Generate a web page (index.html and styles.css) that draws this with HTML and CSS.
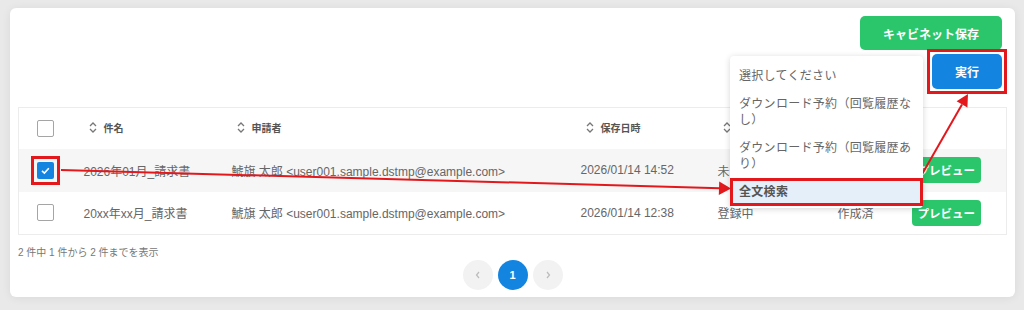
FILE: index.html
```html
<!DOCTYPE html>
<html lang="ja">
<head>
  <meta charset="UTF-8">
  <title>キャビネット一覧</title>
  <link rel="stylesheet" href="styles.css">
</head>
<body>

  <div class="card">
    <div class="actions">
      <button class="btn btn-save">キャビネット保存</button>
      <div class="exec-row">
        <ul class="select-list">
          <li>選択してください</li>
          <li>ダウンロード予約（回覧履歴なし）</li>
          <li>ダウンロード予約（回覧履歴あり）</li>
          <li class="active">全文検索</li>
        </ul>
        <button class="btn btn-exec marked">実行</button>
      </div>
    </div>

    <table class="doc-table">
      <colgroup>
        <col class="c-check">
        <col class="c-name">
        <col class="c-user">
        <col class="c-date">
        <col class="c-status">
        <col class="c-preview">
        <col class="c-action">
      </colgroup>
      <thead>
        <tr>
          <th class="check"><span class="cb"></span></th>
          <th><span class="sort"><svg width="8" height="13" viewBox="0 0 8 13"><path d="M1 5L4 2L7 5M1 8L4 11L7 8"/></svg>件名</span></th>
          <th><span class="sort"><svg width="8" height="13" viewBox="0 0 8 13"><path d="M1 5L4 2L7 5M1 8L4 11L7 8"/></svg>申請者</span></th>
          <th><span class="sort"><svg width="8" height="13" viewBox="0 0 8 13"><path d="M1 5L4 2L7 5M1 8L4 11L7 8"/></svg>保存日時</span></th>
          <th><span class="sort"><svg width="8" height="13" viewBox="0 0 8 13"><path d="M1 5L4 2L7 5M1 8L4 11L7 8"/></svg>ステータス</span></th>
          <th><span class="sort"><svg width="8" height="13" viewBox="0 0 8 13"><path d="M1 5L4 2L7 5M1 8L4 11L7 8"/></svg>作成</span></th>
          <th></th>
        </tr>
      </thead>
      <tbody>
        <tr>
          <td class="check"><span class="cb checked marked"><svg width="17" height="17" viewBox="0 0 17 17"><path d="M5 8.8L7.4 11L11.8 6.2"/></svg></span></td>
          <td>2026年01月_請求書</td>
          <td>鯱旗 太郎 &lt;user001.sample.dstmp@example.com&gt;</td>
          <td>2026/01/14 14:52</td>
          <td>未登録</td>
          <td>作成済</td>
          <td><button class="btn btn-preview">プレビュー</button></td>
        </tr>
        <tr>
          <td class="check"><span class="cb"></span></td>
          <td>20xx年xx月_請求書</td>
          <td>鯱旗 太郎 &lt;user001.sample.dstmp@example.com&gt;</td>
          <td>2026/01/14 12:38</td>
          <td>登録中</td>
          <td>作成済</td>
          <td><button class="btn btn-preview">プレビュー</button></td>
        </tr>
      </tbody>
    </table>

    <div class="info">2 件中 1 件から 2 件までを表示</div>

    <div class="pager">
      <span class="page"><svg width="6" height="8" viewBox="0 0 6 8"><path d="M4 1L1.5 4L4 7"/></svg></span>
      <span class="page current">1</span>
      <span class="page"><svg width="6" height="8" viewBox="0 0 6 8"><path d="M2 1L4.5 4L2 7"/></svg></span>
    </div>
  </div>

  <svg class="annot" width="1024" height="310" viewBox="0 0 1024 310">
    <line x1="61" y1="170" x2="720" y2="188.2"/>
    <polygon points="731,188.5 718.8,194.9 719.2,181.6"/>
    <line x1="921" y1="176" x2="962" y2="104.4"/>
    <polygon points="968,94 967.4,107.6 956.6,101.2"/>
  </svg>

</body>
</html>
```

FILE: styles.css
```css
* { box-sizing: border-box; }
body { margin: 0; height: 310px; overflow: hidden; position: relative; background: #e9e9e9; font-family: "Liberation Sans", "Noto Sans CJK JP", sans-serif; color: #666; }

.card { position: relative; margin: 8px 9px 0 10px; padding: 8px 8px 7px; background: #fff; border-radius: 6px; box-shadow: 0 1px 10px rgba(0, 0, 0, .07); }

.actions { display: flex; flex-direction: column; align-items: flex-end; gap: 4px; margin-right: 5px; }
.btn { border: 0; border-radius: 5px; color: #fff; font: bold 12px "Liberation Sans", "Noto Sans CJK JP", sans-serif; cursor: pointer; }
.btn-save { height: 34px; padding: 0 23px; background: #2bc66c; }
.btn-exec { width: 70px; height: 35px; background: #1484e1; }

/* red annotation frames */
.marked { position: relative; }
.marked::after { content: ""; position: absolute; inset: -5px; border: 3px solid #e3181d; }
.cb.marked::after { inset: -6px; }

.exec-row { position: relative; }
.select-list { position: absolute; z-index: 2; top: 2px; right: calc(100% + 9px); width: 193px; margin: 0; padding: 6px 0 2px; list-style: none; background: #fff; border-radius: 4px; box-shadow: 0 1px 6px rgba(0, 0, 0, .16); }
.select-list li { padding: 6px 9px; font-size: 12px; line-height: 16px; letter-spacing: .3px; color: #666; }
.select-list li.active { background: #e4effa; color: #555; font-weight: bold; box-shadow: inset 0 0 0 3px #e3181d; }

.doc-table { width: 100%; margin-top: 18px; border-collapse: collapse; table-layout: fixed; border: 1px solid #ececec; font-size: 12px; }
.c-check { width: 54px; }
.c-name { width: 148px; }
.c-user { width: 349px; }
.c-date { width: 137px; }
.c-status { width: 120px; }
.c-preview { width: 74px; }
.doc-table th { height: 41px; padding: 0 0 0 16px; text-align: left; font-size: 10px; font-weight: bold; color: #555; white-space: nowrap; overflow: hidden; }
.doc-table td { height: 43px; padding: 0 0 0 11px; white-space: nowrap; overflow: hidden; }
.doc-table tbody tr:first-child { background: #f6f6f6; }
.doc-table .check { padding: 0; text-align: center; overflow: visible; }

.sort { display: inline-flex; align-items: center; gap: 7px; }
.sort svg { fill: none; stroke: #777; stroke-width: 1.3; }

.cb { display: inline-block; width: 17px; height: 17px; vertical-align: middle; border: 1.5px solid #a5a5a5; border-radius: 2px; background: #fff; }
.cb.checked { border: 0; background: #1484e1; }
.cb svg { display: block; fill: none; stroke: #fff; stroke-width: 1.6; }

.btn-preview { height: 26px; padding: 0 6px; border-radius: 4px; background: #2bc66c; font-size: 11.5px; }

.info { margin-top: 11px; font-size: 10px; line-height: 14px; color: #777; }

.pager { display: flex; justify-content: center; gap: 5px; }
.page { display: flex; align-items: center; justify-content: center; width: 30px; height: 30px; border-radius: 50%; background: #f2f2f2; }
.page svg { fill: none; stroke: #bbb; stroke-width: 1.2; }
.page.current { background: #1484e1; color: #fff; font-size: 11px; font-weight: bold; }

.annot { position: absolute; top: 0; left: 0; pointer-events: none; }
.annot line { stroke: #e3181d; stroke-width: 2; }
.annot polygon { fill: #e3181d; }
```
